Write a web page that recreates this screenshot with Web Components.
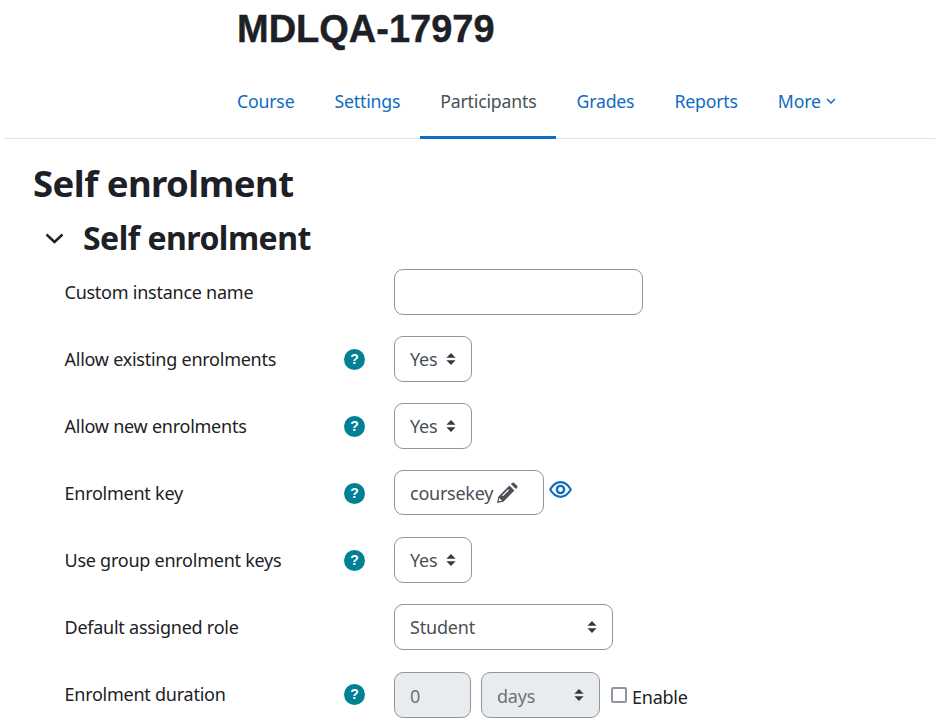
<!DOCTYPE html>
<html>
<head>
<meta charset="utf-8">
<style>
  html, body { margin: 0; padding: 0; background: #fff; height: 722px; overflow: hidden; }
  body { font-family: "Noto Sans", "Open Sans", sans-serif; color: #1d2125; }
</style>
</head>
<body>
<course-header heading="MDLQA-17979"></course-header>
<tab-nav>
  <tab-link>Course</tab-link>
  <tab-link>Settings</tab-link>
  <tab-link active>Participants</tab-link>
  <tab-link>Grades</tab-link>
  <tab-link>Reports</tab-link>
  <tab-link caret>More</tab-link>
</tab-nav>
<page-body>
  <form-section heading="Self enrolment">
    <form-row label="Custom instance name"><text-box width="249"></text-box></form-row>
    <form-row label="Allow existing enrolments" help><select-box width="78" gap="9">Yes</select-box></form-row>
    <form-row label="Allow new enrolments" help><select-box width="78" gap="9">Yes</select-box></form-row>
    <form-row label="Enrolment key" help><key-field value="coursekey"></key-field></form-row>
    <form-row label="Use group enrolment keys" help><select-box width="78" gap="9">Yes</select-box></form-row>
    <form-row label="Default assigned role"><select-box width="219">Student</select-box></form-row>
    <form-row label="Enrolment duration" help><duration-field></duration-field></form-row>
  </form-section>
</page-body>

<script>
const ARROWS = `<svg width="10" height="14" viewBox="0 0 10 14" fill="#343a40" style="flex:none"><path d="M5 1 L9.6 5.8 H.4 Z"/><path d="M5 13 L.4 8.2 H9.6 Z"/></svg>`;

class CourseHeader extends HTMLElement {
  connectedCallback() {
    this.attachShadow({ mode: 'open' });
    this.shadowRoot.innerHTML = `
      <style>
        :host { display: block; height: 72px; padding-left: 237px; box-sizing: border-box; }
        h1 { margin: 0; font: 700 38px/58px "Liberation Sans", Arial, sans-serif; -webkit-text-stroke: 0.4px #1d2125; color: #1d2125; }
      </style>
      <h1>${this.getAttribute('heading') || ''}</h1>`;
  }
}

class TabNav extends HTMLElement {
  connectedCallback() {
    this.attachShadow({ mode: 'open' });
    this.shadowRoot.innerHTML = `
      <style>
        :host { display: flex; height: 67px; margin-left: 4px; padding-left: 213px; box-sizing: border-box; border-bottom: 1px solid #dee2e6; }
      </style>
      <slot></slot>`;
  }
}

class TabLink extends HTMLElement {
  connectedCallback() {
    this.attachShadow({ mode: 'open' });
    const active = this.hasAttribute('active');
    const caret = this.hasAttribute('caret')
      ? `<svg width="10" height="6" viewBox="0 0 10 6" fill="none" stroke="#0f6cbf" stroke-width="1.5"><path d="M1 1 L5 5 L9 1"/></svg>` : '';
    this.shadowRoot.innerHTML = `
      <style>
        :host { display: flex; align-items: center; gap: 5px; height: 67px; padding: 1px 20px 8px; box-sizing: border-box;
          font-size: 17.7px; letter-spacing: -0.19px; color: ${active ? '#495057' : '#0f6cbf'};
          border-bottom: 3px solid ${active ? '#0f6cbf' : 'transparent'}; margin-bottom: -1px; }
      </style>
      <slot></slot>${caret}`;
  }
}

class PageBody extends HTMLElement {
  connectedCallback() {
    this.attachShadow({ mode: 'open' });
    this.shadowRoot.innerHTML = `
      <style>
        :host { display: block; padding: 19px 0 0 33px; }
        h2 { margin: 0; font: 700 36.5px/50px "Noto Sans", sans-serif; letter-spacing: -0.55px; color: #1d2125; }
      </style>
      <h2>Self enrolment</h2>
      <slot></slot>`;
  }
}

class FormSection extends HTMLElement {
  connectedCallback() {
    this.attachShadow({ mode: 'open' });
    this.shadowRoot.innerHTML = `
      <style>
        :host { display: block; }
        .head { display: flex; align-items: center; height: 60px; }
        svg { margin-left: 12px; width: 19px; flex: none; }
        h3 { margin: 0 0 0 19px; font: 700 32px/44px "Noto Sans", sans-serif; letter-spacing: -0.52px; color: #1d2125; }
        .rows { display: flex; flex-direction: column; gap: 21px; margin-top: 1px; }
      </style>
      <div class="head">
        <svg viewBox="0 0 19 11" height="11" fill="none" stroke="#1d2125" stroke-width="2.4"><path d="M1.5 1.5 L9.5 9 L17.5 1.5"/></svg>
        <h3>${this.getAttribute('heading') || ''}</h3>
      </div>
      <div class="rows"><slot></slot></div>`;
  }
}

class FormRow extends HTMLElement {
  connectedCallback() {
    this.attachShadow({ mode: 'open' });
    const help = this.hasAttribute('help') ? `<span class="help">?</span>` : '';
    this.shadowRoot.innerHTML = `
      <style>
        :host { display: flex; align-items: center; height: 46px; }
        .label { width: 279.5px; margin-left: 31.5px; font-size: 18px; letter-spacing: -0.25px; color: #1d2125; flex: none; }
        .icon { width: 50px; flex: none; }
        .help { display: block; width: 21px; height: 21px; border-radius: 50%; background: #008196; color: #fff;
          font: 700 14px/21px "Liberation Sans", sans-serif; text-align: center; }
      </style>
      <div class="label">${this.getAttribute('label') || ''}</div>
      <div class="icon">${help}</div>
      <slot></slot>`;
  }
}

class TextBox extends HTMLElement {
  connectedCallback() {
    this.attachShadow({ mode: 'open' });
    this.shadowRoot.innerHTML = `
      <style>
        :host { display: block; width: ${this.getAttribute('width')}px; height: 46px; box-sizing: border-box;
          border: 1px solid #8f959e; border-radius: 9px; background: #fff; }
      </style>`;
  }
}

class SelectBox extends HTMLElement {
  connectedCallback() {
    this.attachShadow({ mode: 'open' });
    const gap = this.getAttribute('gap');
    const off = this.hasAttribute('disabled');
    this.shadowRoot.innerHTML = `
      <style>
        :host { display: flex; align-items: center; justify-content: ${gap ? 'flex-start' : 'space-between'};
          gap: ${gap || 0}px; width: ${this.getAttribute('width')}px; height: 46px; box-sizing: border-box;
          padding: 0 15px; border: 1px solid #8f959e; border-radius: 9px;
          background: ${off ? '#e9ecef' : '#fff'}; font-size: 18px; letter-spacing: -0.2px; color: ${off ? '#6a737b' : '#495057'}; }
        span { padding-top: ${off ? 2 : 0}px; }
      </style>
      <span><slot></slot></span>${ARROWS}`;
  }
}

class KeyField extends HTMLElement {
  connectedCallback() {
    this.attachShadow({ mode: 'open' });
    this.shadowRoot.innerHTML = `
      <style>
        :host { display: flex; align-items: flex-start; align-self: flex-start; gap: 5px; }
        .box { display: flex; align-items: center; gap: 3px; width: 150px; height: 45px; box-sizing: border-box; padding: 0 15px;
          border: 1px solid #8f959e; border-radius: 9px; font-size: 18px; letter-spacing: -0.25px; color: #495057; }
        .eye { margin-top: 11px; }
      </style>
      <div class="box">${this.getAttribute('value')}
        <svg width="22" height="22" viewBox="0 0 21 21" style="flex:none"><path fill="#495057" d="M1 20 L2.2 14 L12.8 3.4 L17.6 8.2 L7 18.8 Z M14.2 2 L15.4 .9 Q16.4 0 17.4 .9 L20.1 3.6 Q21 4.6 20.1 5.6 L19 6.8 Z"/><path fill="#fff" d="M3.2 15.2 L5.8 17.8 L2.6 18.4 Z M11.6 7 L12.4 7.8 L6.6 13.6 L5.8 12.8 Z"/></svg>
      </div>
      <svg class="eye" width="23" height="17" viewBox="0 0 23 17" fill="none" stroke="#0f6cbf"><path stroke-width="2.2" d="M1.2 8.5 C4 3.6 7.4 1.2 11.5 1.2 C15.6 1.2 19 3.6 21.8 8.5 C19 13.4 15.6 15.8 11.5 15.8 C7.4 15.8 4 13.4 1.2 8.5 Z"/><circle cx="11.5" cy="8.5" r="3.6" stroke-width="2.4"/></svg>`;
  }
}

class DurationField extends HTMLElement {
  connectedCallback() {
    this.attachShadow({ mode: 'open' });
    this.shadowRoot.innerHTML = `
      <style>
        :host { display: flex; align-items: center; position: relative; top: 1px; }
        .num { width: 77px; height: 46px; box-sizing: border-box; padding: 0 15px; line-height: 47px; border: 1px solid #8f959e;
          border-radius: 9px; background: #e9ecef; font-size: 18px; color: #6a737b; margin-right: 10px; }
        select-box { margin-right: 11px; }
        .check { width: 16px; height: 16px; box-sizing: border-box; border: 2px solid #8f959e; border-radius: 2px; margin-right: 5px; }
        .txt { font-size: 18px; letter-spacing: -0.25px; color: #1d2125; padding-top: 3px; }
      </style>
      <div class="num">0</div>
      <select-box width="119" disabled>days</select-box>
      <span class="check"></span><span class="txt">Enable</span>`;
  }
}

customElements.define('course-header', CourseHeader);
customElements.define('tab-nav', TabNav);
customElements.define('tab-link', TabLink);
customElements.define('page-body', PageBody);
customElements.define('form-section', FormSection);
customElements.define('form-row', FormRow);
customElements.define('text-box', TextBox);
customElements.define('select-box', SelectBox);
customElements.define('key-field', KeyField);
customElements.define('duration-field', DurationField);
</script>
</body>
</html>
